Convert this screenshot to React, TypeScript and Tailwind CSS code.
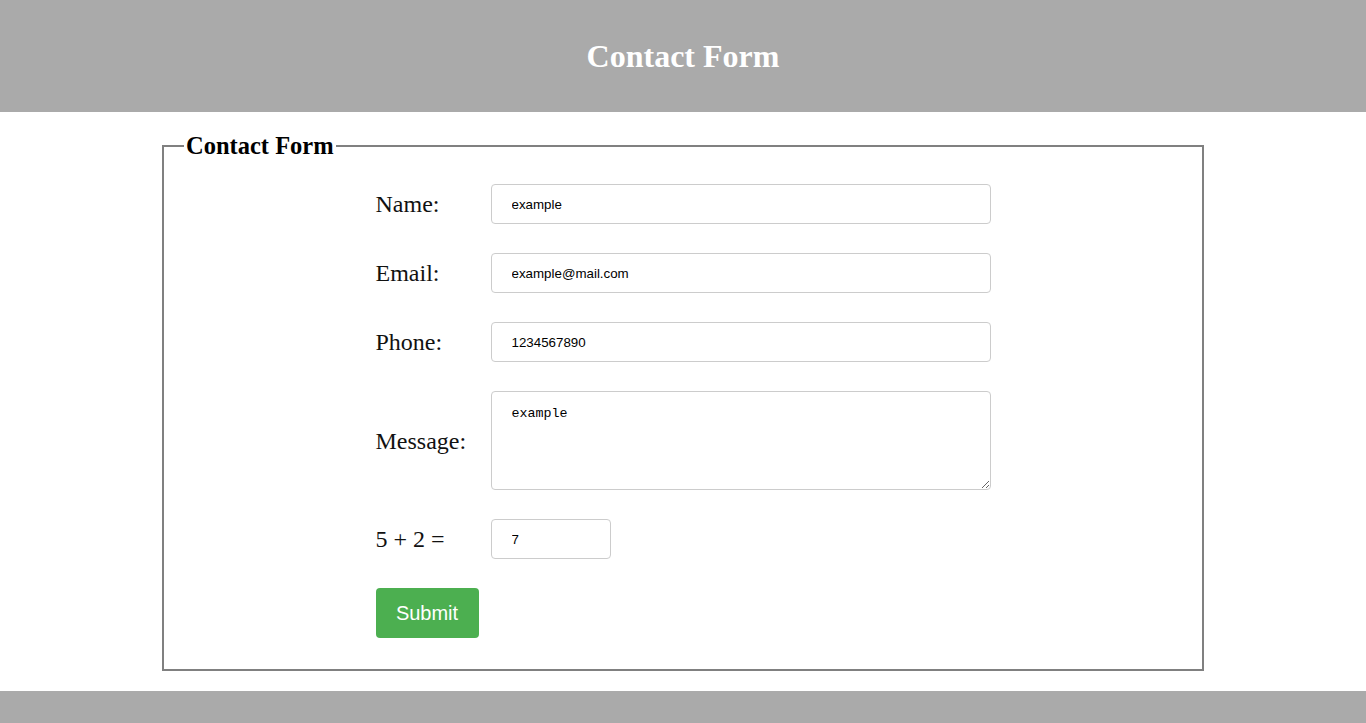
import React from 'react'

const serif = { fontFamily: '"Liberation Serif", "Times New Roman", serif' }

function Row({ label, children, tall }: { label: string; children: React.ReactNode; tall?: boolean }) {
  return (
    <div className={`flex items-center ${tall ? 'h-[99px]' : 'h-10'}`}>
      <label className="w-[115px] shrink-0 text-[24px] text-[#111]" style={serif}>
        {label}
      </label>
      {children}
    </div>
  )
}

const inputCls =
  'h-10 rounded border border-[#ccc] bg-white px-5 text-[13.33px] text-black outline-none font-[Liberation_Sans,Arial,sans-serif]'

export default function App() {
  return (
    <div className="min-h-screen bg-white">
      <header className="flex h-[112px] items-center justify-center bg-[#aaaaaa]">
        <h1 className="text-[32px] font-bold leading-none text-white" style={serif}>
          Contact Form
        </h1>
      </header>

      <fieldset className="mx-auto mt-5 w-[1042px] border-2 border-[#808080] px-5 pb-[31px] pt-6">
        <legend className="px-0.5 text-[24.5px] font-bold leading-[28px] text-black" style={serif}>
          Contact Form
        </legend>
        <form className="mx-auto flex w-[615px] flex-col gap-[29px]" onSubmit={e => e.preventDefault()}>
          <Row label="Name:">
            <input className={`${inputCls} w-[500px]`} defaultValue="example" />
          </Row>
          <Row label="Email:">
            <input className={`${inputCls} w-[500px]`} defaultValue="example@mail.com" />
          </Row>
          <Row label="Phone:">
            <input className={`${inputCls} w-[500px]`} defaultValue="1234567890" />
          </Row>
          <Row label="Message:" tall>
            <textarea
              className="h-[99px] w-[500px] resize rounded border border-[#ccc] bg-white px-5 pt-3 text-[13.33px] text-black outline-none font-[Liberation_Mono,DejaVu_Sans_Mono,monospace]"
              defaultValue="example"
            />
          </Row>
          <Row label="5 + 2 =">
            <input className={`${inputCls} w-[120px]`} defaultValue="7" />
          </Row>
          <div>
            <button
              type="submit"
              className="h-[50px] w-[103px] rounded bg-[#4caf50] text-[20px] text-white font-[Liberation_Sans,Arial,sans-serif]"
            >
              Submit
            </button>
          </div>
        </form>
      </fieldset>

      <footer className="mt-5 h-[60px] bg-[#aaaaaa]" />
    </div>
  )
}
